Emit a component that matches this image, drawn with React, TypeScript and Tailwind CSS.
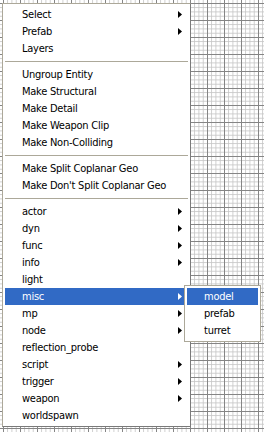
import { ReactNode } from "react";

type Entry = { label: string; sub?: boolean } | "sep";

const items: Entry[] = [
  { label: "Select", sub: true },
  { label: "Prefab", sub: true },
  { label: "Layers" },
  "sep",
  { label: "Ungroup Entity" },
  { label: "Make Structural" },
  { label: "Make Detail" },
  { label: "Make Weapon Clip" },
  { label: "Make Non-Colliding" },
  "sep",
  { label: "Make Split Coplanar Geo" },
  { label: "Make Don't Split Coplanar Geo" },
  "sep",
  { label: "actor", sub: true },
  { label: "dyn", sub: true },
  { label: "func", sub: true },
  { label: "info", sub: true },
  { label: "light" },
  { label: "misc", sub: true },
  { label: "mp", sub: true },
  { label: "node", sub: true },
  { label: "reflection_probe" },
  { label: "script", sub: true },
  { label: "trigger", sub: true },
  { label: "weapon", sub: true },
  { label: "worldspawn" },
];

function Arrow({ white }: { white?: boolean }) {
  return (
    <svg width="4" height="7" viewBox="0 0 4 7" className="shrink-0">
      <path d="M0 0 L4 3.5 L0 7 Z" fill={white ? "#ffffff" : "#000000"} />
    </svg>
  );
}

function Row({ label, sub, active, children }: { label: string; sub?: boolean; active?: boolean; children?: ReactNode }) {
  return (
    <div
      className={`flex h-[17px] items-center pl-[17px] pr-[6px] ${
        active ? "bg-[#316ac5] text-white" : "text-black"
      }`}
    >
      <span className="flex-1 leading-none whitespace-nowrap tracking-[-0.25px]">{label}</span>
      {sub && <Arrow white={active} />}
      {children}
    </div>
  );
}

export default function App() {
  return (
    <div
      className="relative h-[432px] w-[264px] overflow-hidden bg-white bg-[linear-gradient(to_right,#858585_1px,transparent_1px),linear-gradient(to_bottom,#858585_1px,transparent_1px),linear-gradient(to_right,#c6c6c6_1px,transparent_1px),linear-gradient(to_bottom,#c6c6c6_1px,transparent_1px)] bg-[size:17px_17px,17px_17px,4.25px_4.25px,4.25px_4.25px] bg-[position:3px_3px]"
      style={{ fontFamily: '"DejaVu Sans Condensed", "DejaVu Sans", sans-serif', fontStretch: "condensed" }}
    >
      {/* main context menu */}
      <div className="absolute left-[2px] top-[3px] w-[189px] border border-[#aca899] border-r-[#7a7a7a] border-b-[#7a7a7a] bg-white p-[2px] text-[11px]">
        {items.map((it, i) =>
          it === "sep" ? (
            <div key={i} className="flex h-[9px] items-center">
              <div className="h-px w-full bg-[#aca899]" />
            </div>
          ) : (
            <Row key={i} label={it.label} sub={it.sub} active={it.label === "misc"} />
          )
        )}
      </div>

      {/* misc submenu */}
      <div className="absolute left-[184px] top-[285px] w-[77px] border border-[#aca899] bg-white p-[2px] text-[11px]">
        <Row label="model" active />
        <Row label="prefab" />
        <Row label="turret" />
      </div>
    </div>
  );
}
